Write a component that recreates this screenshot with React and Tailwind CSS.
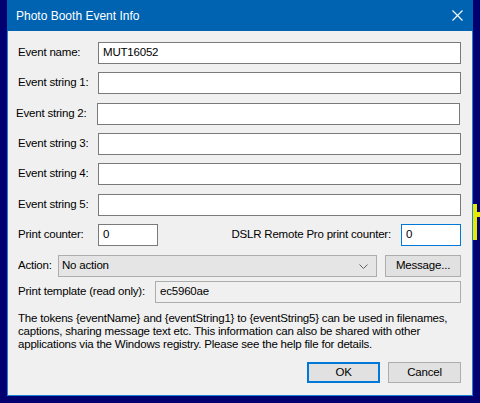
import React from "react";

const font = { fontFamily: '"Liberation Sans", Arial, sans-serif' };

function Field({ value = "", className = "", focused = false }) {
  return (
    <div
      className={`h-[22px] bg-white border flex items-center pl-[4px] text-black ${
        focused ? "border-[#0078d7]" : "border-[#7a7a7a]"
      } ${className}`}
    >
      {value}
    </div>
  );
}

function Row({ label, className = "", labelClass = "", fieldClass = "", value }) {
  return (
    <div className={`flex items-center h-[22px] ${className}`}>
      <span className={`w-[80px] shrink-0 whitespace-nowrap ${labelClass}`}>{label}</span>
      <Field value={value} className={`flex-1 ${fieldClass}`} />
    </div>
  );
}

export default function App() {
  return (
    <div className="relative w-[480px] h-[403px] bg-[#000070] overflow-hidden" style={font}>
      {/* piece of a desktop glyph behind the window */}
      <div className="absolute left-[473px] top-[204px] w-[4px] h-[36px] bg-[#e8e800]" />
      <div className="absolute left-[473px] top-[212px] w-[7px] h-[5px] bg-[#e8e800]" />

      <div className="relative ml-[7px] w-[466px] h-[396px] border border-t-0 border-[#1883d7] bg-[#f0f0f0] flex flex-col text-[11.5px] tracking-[-0.2px] text-black whitespace-nowrap">
        {/* title bar */}
        <div className="h-[31px] -mx-px bg-[#0063b1] flex items-center justify-between pl-[9px] pr-[9px] text-white">
          <span className="text-[12px] tracking-normal">Photo Booth Event Info</span>
          <svg width="11" height="11" viewBox="0 0 11 11" className="mr-[1px]">
            <path d="M0.5 0.5 L10.5 10.5 M10.5 0.5 L0.5 10.5" stroke="white" strokeWidth="1.1" />
          </svg>
        </div>

        <div className="flex flex-col pl-[10px] pr-[11px]">
          <Row label="Event name:" value="MUT16052" className="mt-[11px]" />
          <Row label="Event string 1:" className="mt-[8px]" />
          <Row
            label="Event string 2:"
            className="mt-[9px]"
            labelClass="-ml-[2px] w-[81px]"
            fieldClass="mr-[1px]"
          />
          <Row label="Event string 3:" className="mt-[8px]" />
          <Row label="Event string 4:" className="mt-[8px]" />
          <Row label="Event string 5:" className="mt-[9px]" />

          <div className="flex items-center h-[22px] mt-[8px]">
            <span className="w-[80px] shrink-0">Print counter:</span>
            <Field value="0" className="w-[60px]" />
            <span className="ml-auto mr-[10px]">DSLR Remote Pro print counter:</span>
            <Field value="0" className="w-[60px]" focused />
          </div>

          <div className="flex items-center h-[22px] mt-[9px]">
            <span className="w-[40px] shrink-0">Action:</span>
            <div className="w-[319px] h-[22px] bg-[#e5e5e5] border border-[#adadad] flex items-center pl-[3px] pr-[8px]">
              <span>No action</span>
              <svg width="9" height="5" viewBox="0 0 9 5" className="ml-auto">
                <path d="M0.5 0.5 L4.5 4.5 L8.5 0.5" fill="none" stroke="#606060" strokeWidth="1" />
              </svg>
            </div>
            <div className="ml-auto w-[76px] h-[22px] bg-[#e1e1e1] border border-[#adadad] flex items-center justify-center">
              Message...
            </div>
          </div>

          <div className="flex items-center h-[22px] mt-[4px]">
            <span className="w-[137px] shrink-0">Print template (read only):</span>
            <div className="flex-1 h-[22px] border border-[#adadad] bg-[#f0f0f0] flex items-center pl-[4px]">
              ec5960ae
            </div>
          </div>

          <p className="mt-[9px] leading-[13px]">
            The tokens {"{eventName}"} and {"{eventString1}"} to {"{eventString5}"} can be used in filenames,
            <br />
            captions, sharing message text etc. This information can also be shared with other
            <br />
            applications via the Windows registry. Please see the help file for details.
          </p>

          <div className="flex justify-end gap-[8px] mt-[11px]">
            <div className="w-[73px] h-[21px] bg-[#e1e1e1] border-2 border-[#0078d7] flex items-center justify-center">
              OK
            </div>
            <div className="w-[73px] h-[21px] bg-[#e1e1e1] border border-[#adadad] flex items-center justify-center">
              Cancel
            </div>
          </div>
        </div>
      </div>
    </div>
  );
}
